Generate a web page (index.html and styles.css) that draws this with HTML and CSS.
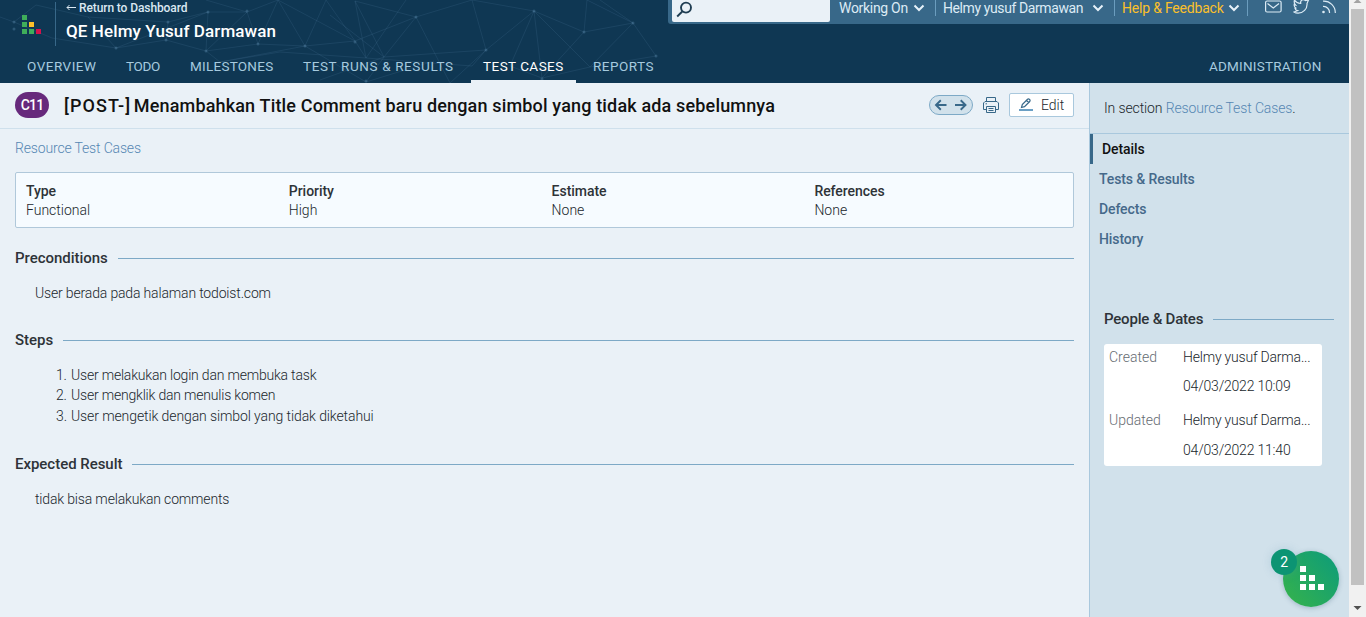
FILE: index.html
```html
<!DOCTYPE html>
<html lang="en">
<head>
<meta charset="utf-8">
<title>C11 - Test Case</title>
<link rel="stylesheet" href="styles.css">
</head>
<body>
<div class="window">
  <div class="page">
    <header class="header">
      <svg class="network" width="668" height="83" viewBox="0 0 668 83">
        <g fill="none" stroke="#5d8bad" stroke-opacity=".16">
          <path d="M0 17L14 22L36 5L88 17L116 48L208 12L206 51L258 44L305 46L326 0M14 22L52 38L116 48L166 40L206 51L247 12L258 44L278 0L305 46L355 41L416 17L384 57L320 80M166 40L168 22L208 12L247 12L278 0L355 41M88 17L168 22M206 51L220 62L305 46L366 82L384 57L355 1L366 58L406 0M220 62L280 52L366 58L472 66L486 50L534 11L584 32L633 23L656 56L590 67L542 78L534 11L472 0M486 50L472 0M434 61L366 82M416 17L355 1M416 17L450 83L486 50M416 17L472 0M534 11L510 66L542 78L584 32L587 0L633 23L590 67L534 11M600 0L633 23M330 15L384 57L486 50M326 0L355 41L366 58M247 12L206 0"/>
        </g>
        <g fill="#5d8bad" fill-opacity=".38">
          <circle cx="14" cy="22" r="1.500"/><circle cx="14" cy="29" r="1.500"/><circle cx="116" cy="48" r="1.500"/><circle cx="168" cy="22" r="1.500"/><circle cx="166" cy="40" r="1.500"/><circle cx="208" cy="12" r="1.500"/><circle cx="206" cy="51" r="1.500"/><circle cx="247" cy="11" r="1.500"/><circle cx="258" cy="44" r="1.500"/><circle cx="305" cy="46" r="1.500"/><circle cx="355" cy="42" r="1.500"/><circle cx="416" cy="17" r="1.500"/><circle cx="486" cy="50" r="1.500"/><circle cx="534" cy="11" r="1.500"/><circle cx="584" cy="32" r="1.500"/><circle cx="633" cy="23" r="1.500"/><circle cx="656" cy="56" r="1.500"/><circle cx="542" cy="79" r="1.500"/><circle cx="366" cy="81" r="1.500"/>
        </g>
      </svg>
      <div class="header-top">
        <div class="brand">
          <svg class="logo" width="20" height="20" viewBox="0 0 20 20">
            <path fill="#3fae5a" d="M0 1h5v5H0zM0 8h5v5H0zM0 15h5v5H0zM7 15h5v5H7z"/>
            <path fill="#fbc02a" d="M7 8h5v5H7z"/><path fill="#d6114b" d="M14 15h5v5h-5z"/>
          </svg>
          <div class="titles">
            <a class="return"><svg width="10" height="7" viewBox="0 0 10 7"><path d="M10 3.500H1M3.500 1L1 3.500L3.500 6" fill="none" stroke="#dbe8f2"/></svg><span>Return to Dashboard</span></a>
            <div class="project"><span>QE Helmy Yusuf Darmawan</span></div>
          </div>
        </div>
        <div class="topbar">
          <div class="search"><svg width="17" height="17" viewBox="0 0 17 17" fill="none" stroke="#1f3d52" stroke-width="1.900"><circle cx="10" cy="6.600" r="5"/><path d="M6.300 10.500L1.200 15.500"/></svg></div>
          <div class="item working"><span>Working On</span><svg class="chev" width="12" height="8" viewBox="0 0 12 8"><path d="M1.500 1.500L6 6L10.500 1.500"/></svg></div>
          <div class="item user"><span>Helmy yusuf Darmawan</span><svg class="chev" width="12" height="8" viewBox="0 0 12 8"><path d="M1.500 1.500L6 6L10.500 1.500"/></svg></div>
          <div class="item help"><span>Help &amp; Feedback</span><svg class="chev" width="12" height="8" viewBox="0 0 12 8"><path d="M1.500 1.500L6 6L10.500 1.500"/></svg></div>
          <div class="social">
            <svg width="17" height="14" viewBox="0 0 17 14"><rect x=".6" y="1" width="15.500" height="11" rx="1.500"/><path d="M2.500 3.500L8.300 8L14 3.500"/></svg>
            <svg width="17" height="14" viewBox="0 0 17 14"><path d="M1.500 0C3 2.500 5 3.500 7.700 3.500C7.200 0 10-1.500 12.500.5L15.500 0L14 3.500C14.500 9 10 13.300 5 13.200C3.500 13.200 2 12.700 1 12L4.500 10.700C3 10.300 2.300 9.500 2 8.300H3.300C1.800 7.500 1 6 1.200 4.600L2.500 5C1.200 3.500 1 1.500 1.500 0Z"/></svg>
            <svg width="15" height="14" viewBox="0 0 15 14"><circle cx="2.500" cy="12" r=".7" fill="#dcebf5"/><path d="M2 6.500A6 6 0 0 1 8.500 13M2 1.200A11.500 11.500 0 0 1 14.300 13"/></svg>
          </div>
        </div>
      </div>
      <nav class="nav">
        <a class="n1"><span>OVERVIEW</span></a><a class="n2"><span>TODO</span></a><a class="n3"><span>MILESTONES</span></a><a class="n4"><span>TEST RUNS &amp; RESULTS</span></a><a class="n5 active"><span>TEST CASES</span></a><a class="n6"><span>REPORTS</span></a><a class="n7"><span>ADMINISTRATION</span></a>
      </nav>
    </header>
    <div class="body">
      <main class="content">
        <div class="titlebar">
          <span class="badge">C11</span>
          <h1><span class="method">[POST-]</span> <span>Menambahkan Title Comment baru dengan simbol yang tidak ada sebelumnya</span></h1>
          <div class="arrows"><svg width="34" height="12" viewBox="0 0 34 12" fill="none" stroke="#386889" stroke-width="1.900"><path d="M12.500 6H2.500M6.800 1.300L2 6L6.800 10.700M21 6H31M26.700 1.300L31.500 6L26.700 10.700"/></svg></div>
          <svg class="printer" width="16" height="16" viewBox="0 0 16 16" fill="none" stroke="#386889"><path d="M3.500 4V.5H12.500V4M3.500 12.500H.5V6L2 4.500H14L15.500 6V12.500H12.500M3.500 9.500H12.500V15.500H3.500ZM5.500 11.500H10.500M5.500 13.500H10.500M2.500 6.800H4"/></svg>
          <div class="edit"><svg width="14" height="13" viewBox="0 0 14 13" fill="none" stroke="#386889" stroke-width="1.200"><path d="M2.500 9.500L3.300 6.500L8.500 1.300Q9.500.5 10.600 1.500Q11.500 2.500 10.700 3.500L5.500 8.700ZM7.500 2.500L9.700 4.500"/><path stroke="#6b9fc4" stroke-width="2" d="M0 12H14"/></svg><span>Edit</span></div>
        </div>
        <div class="scroll">
          <div class="crumb"><span>Resource Test Cases</span></div>
          <div class="props">
            <div><b>Type</b><span>Functional</span></div>
            <div><b>Priority</b><span>High</span></div>
            <div><b>Estimate</b><span>None</span></div>
            <div><b>References</b><span>None</span></div>
          </div>
          <h2><span>Preconditions</span></h2>
          <p><span>User berada pada halaman todoist.com</span></p>
          <h2><span>Steps</span></h2>
          <ol>
            <li><i>1.</i><span>User melakukan login dan membuka task</span></li>
            <li><i>2.</i><span>User mengklik dan menulis komen</span></li>
            <li class="wide"><i>3.</i><span>User mengetik dengan simbol yang tidak diketahui</span></li>
          </ol>
          <h2><span>Expected Result</span></h2>
          <p><span>tidak bisa melakukan comments</span></p>
        </div>
      </main>
      <aside class="sidebar">
        <div class="section"><span>In section <a>Resource Test Cases</a>.</span></div>
        <ul class="menu">
          <li class="current"><span>Details</span></li>
          <li><span>Tests &amp; Results</span></li>
          <li><span>Defects</span></li>
          <li><span>History</span></li>
        </ul>
        <h2><span>People &amp; Dates</span></h2>
        <div class="people">
          <span class="label">Created</span><span>Helmy yusuf Darma...</span>
          <span></span><span>04/03/2022 10:09</span>
          <span class="label">Updated</span><span>Helmy yusuf Darma...</span>
          <span></span><span>04/03/2022 11:40</span>
        </div>
      </aside>
    </div>
  </div>
  <div class="scrollbar">
    <svg width="17" height="9" viewBox="0 0 17 9"><path fill="#a3a3a3" d="M4.500 3L8.500-1L12.500 3Z"/></svg>
    <div class="thumb"></div>
    <svg width="17" height="32" viewBox="0 0 17 32"><path fill="#505050" d="M4.500 21H12.500L8.500 25Z"/></svg>
  </div>
</div>
<div class="fab"><svg width="25" height="25" viewBox="0 0 25 25"><path fill="#fff" d="M0 0h6v6H0zM0 9h6v6H0zM0 18h6v6H0zM9 9h6v6H9zM9 18h6v6H9zM18 18h6v6h-6z"/></svg><div class="count">2</div></div>
</body>
</html>
```
FILE: styles.css
```css
* { box-sizing: border-box; }
body { margin: 0; font: 14px/20px Roboto, "Liberation Sans", sans-serif; font-weight: 300; letter-spacing: -.16px; color: #20262c; overflow: hidden; }
h1, h2, p, ol, ul { margin: 0; padding: 0; font-weight: 500; list-style: none; }
span { white-space: nowrap; }
.window { display: flex; width: 1366px; height: 617px; }
.page { display: flex; flex-direction: column; width: 1349px; }

.header { position: relative; height: 83px; background: #0f3753; color: #a6cadf; font-weight: 400; }
.network { position: absolute; left: 0; top: 0; }
.header-top { position: relative; display: flex; justify-content: space-between; height: 50px; }
.brand { display: flex; padding-left: 22px; }
.logo { margin-top: 14px; }
.titles { margin: 2px 0 0 13px; padding-left: 10px; height: 44px; border-left: 1px solid #386889; color: #fff; }
.return { display: flex; align-items: center; gap: 3px; height: 11px; font-size: 12px; font-weight: 500; letter-spacing: -.1px; color: #dbe8f2; }
.project { margin-top: 8px; font-size: 17px; font-weight: 500; letter-spacing: .1px; }
.topbar { display: flex; width: 681px; height: 24px; padding-left: 4px; background: #386889; border-bottom-left-radius: 3px; color: #dcebf5; letter-spacing: -.3px; }
.search { width: 158px; height: 22px; padding: 1px 4px; background: #eaf1f7; border-radius: 0 0 2px 2px; }
.item { display: flex; align-items: center; justify-content: space-between; height: 16px; border-right: 1px solid #6b9dbe; }
.chev { fill: none; stroke: #e6f1f9; stroke-width: 2; }
.working { width: 106px; padding: 0 10px 0 9px; }
.user { width: 179px; padding: 0 10px 0 7px; letter-spacing: -.4px; }
.help { width: 133px; padding: 0 7px; letter-spacing: -.2px; }
.help span { color: #fbc02a; }
.social { display: flex; gap: 11px; padding-left: 17px; }
.social svg { fill: none; stroke: #dcebf5; stroke-width: 1.2; }
.nav { position: relative; display: flex; height: 33px; padding-left: 15px; font-size: 13.5px; }
.nav a { flex-shrink: 0; padding: 6px 12px 0; }
.n1 { width: 99px; letter-spacing: .5px; }
.n2 { width: 64px; letter-spacing: -.3px; }
.n3 { width: 113px; letter-spacing: .25px; }
.n4 { width: 180px; letter-spacing: .62px; }
.n5 { width: 105px; letter-spacing: .45px; }
.nav .n6 { width: 90px; padding-left: 17px; letter-spacing: .5px; }
.nav .n7 { margin-left: auto; width: 152px; letter-spacing: .22px; }
.nav .active { color: #fff; border-bottom: 3px solid #eaf1f7; }

.body { display: flex; flex: 1; }
.content { width: 1089px; background: #eaf1f7; }
.titlebar { display: flex; align-items: center; height: 46px; padding: 0 15px 1px; border-bottom: 1px solid #cfe0ec; }
.badge { width: 34px; height: 26px; border-radius: 13px; background: #67297c; color: #fff; font-weight: 500; line-height: 26px; letter-spacing: -.8px; text-align: center; }
h1 { flex: 1; padding: 2px 0 0 15px; font-size: 18px; letter-spacing: .16px; color: #111; }
.method { margin-right: -2px; letter-spacing: 1.1px; }
.arrows { display: flex; align-items: center; justify-content: center; width: 44px; height: 20px; margin-top: -1px; border: 1px solid #7da9c6; border-radius: 10px; background: #d1e1eb; }
.printer { margin: -1px 10px 0; }
.edit { display: flex; align-items: center; gap: 8px; width: 65px; height: 24px; margin-top: -1px; padding-left: 9px; border: 1px solid #a9c8dd; border-radius: 2px; background: #fff; letter-spacing: 0; }
.scroll { padding: 9px 15px 0; }
.crumb, .section a { color: #5687b3; }
.props { display: grid; grid-template-columns: repeat(4, 262.8px); height: 56px; margin-top: 14px; padding: 8px 10px; border: 1px solid #b0c8da; border-radius: 2px; background: #f6fbff; }
.props > div { display: flex; flex-direction: column; letter-spacing: 0; }
.props span { margin-top: -1px; }
.props b { font-weight: 500; letter-spacing: -.04px; color: #2e3338; }
h2 { display: flex; align-items: center; gap: 10px; height: 20px; font-size: 15px; letter-spacing: -.03px; color: #2e3338; }
h2::after { content: ""; flex: 1; height: 1px; margin-top: 1px; background: #7da9c6; }
.props + h2 { margin-top: 20px; }
p { padding: 15px 20px 27px; font-weight: 300; }
ol { padding: 15px 41px 27.8px; font-weight: 300; letter-spacing: -.2px; }
li { display: flex; }
ol li { height: 20.4px; }
ol .wide { letter-spacing: -.1px; }
ol i { width: 15px; font-style: normal; }

.sidebar { width: 260px; background: #d1e1eb; border-left: 1px solid #a9c8dd; }
.section { height: 51px; padding: 15px 14px 0; border-bottom: 1px solid #a9c8dd; letter-spacing: -.12px; }
.menu li { height: 30px; padding: 5px 9px; font-weight: 500; letter-spacing: -.1px; color: #45698a; }
.menu .current { border-left: 3px solid #386889; color: #111; }
.sidebar h2 { margin: 55px 15px 15px 14px; letter-spacing: -.2px; }
.people { display: grid; grid-template-columns: 74px 1fr; grid-template-rows: 29px 34px 30px 28px; width: 218px; height: 122px; margin-left: 14px; padding: 3px 5px 0; border-radius: 3px; background: #fff; letter-spacing: -.2px; }
.label { color: #666c72; letter-spacing: 0; }

.scrollbar { display: flex; flex-direction: column; width: 17px; background: #f1f1f1; }
.thumb { flex: 1; width: 13px; margin-left: 2px; background: #c1c1c1; }
.fab { position: absolute; left: 1283px; top: 551px; display: flex; align-items: center; justify-content: center; width: 56px; height: 56px; border-radius: 50%; background: linear-gradient(50deg, #37b34a, #0c9b7b); box-shadow: 0 1px 5px rgba(40, 80, 110, .3); }
.fab svg { margin: -1px 0 0 2px; }
.count { position: absolute; left: -12px; top: -2px; width: 26px; height: 26px; border-radius: 50%; background: #0c9473; color: #fff; font-weight: 400; line-height: 26px; text-align: center; box-shadow: 0 0 8px rgba(90, 150, 180, .25); }
```
